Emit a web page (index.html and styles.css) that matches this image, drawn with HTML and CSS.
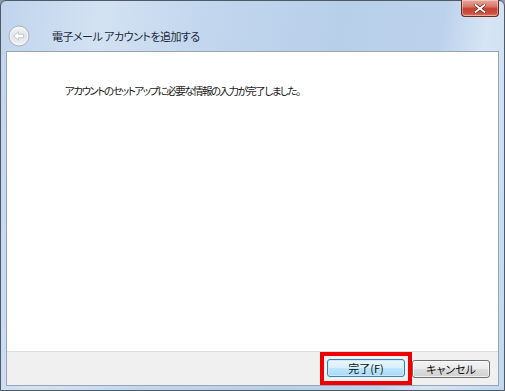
FILE: index.html
```html
<!DOCTYPE html>
<html lang="ja">

<head>
    <meta charset="UTF-8">
    <title>電子メール アカウントを追加する</title>
    <link rel="stylesheet" href="styles.css">
</head>

<body>
    <div class="window">
        <div class="titlebar">
            <button class="back-button" type="button" aria-label="戻る">
                <svg width="22" height="22" viewBox="0 0 22 22">
                    <defs>
                        <linearGradient id="backFill" x1="0" y1="0" x2="0" y2="1">
                            <stop offset="0" stop-color="#f4f7fa"/>
                            <stop offset="0.5" stop-color="#dde3ea"/>
                            <stop offset="1" stop-color="#eef2f6"/>
                        </linearGradient>
                    </defs>
                    <circle cx="11" cy="11" r="10" fill="url(#backFill)" stroke="#a9b4c0" stroke-width="1"/>
                    <circle cx="11" cy="11" r="8.6" fill="none" stroke="#ffffff" stroke-width="0.8" opacity="0.8"/>
                    <path d="M6 11 L10.5 6.8 L10.5 9.3 L15.5 9.3 L15.5 12.7 L10.5 12.7 L10.5 15.2 Z" fill="#ffffff" stroke="#b7c0ca" stroke-width="0.8" stroke-linejoin="round"/>
                </svg>
            </button>
            <span class="title">電子メール アカウントを追加する</span>
            <button class="close-button" type="button" aria-label="閉じる">
                <svg width="12" height="9" viewBox="0 0 12 9">
                    <path d="M1.5 1 L10.5 8 M10.5 1 L1.5 8" stroke="#5b2018" stroke-width="3" stroke-linecap="square"/>
                    <path d="M1.5 1 L10.5 8 M10.5 1 L1.5 8" stroke="#ffffff" stroke-width="1.8" stroke-linecap="square"/>
                </svg>
            </button>
        </div>

        <div class="panel">
            <div class="content">
                <p class="message">アカウントのセットアップに必要な情報の入力が完了しました。</p>
            </div>
            <div class="footer">
                <span class="highlight">
                    <button class="btn btn-default" type="button">完了(F)</button>
                </span>
                <button class="btn" type="button">キャンセル</button>
            </div>
        </div>
    </div>
</body>

</html>
```

FILE: styles.css
```css
body {
    margin: 0;
    padding: 0;
    background: #8f99a3;
    font-family: "Noto Sans CJK JP", "Noto Sans", sans-serif;
    font-feature-settings: "palt";
}

.window {
    width: 505px;
    height: 391px;
    box-sizing: border-box;
    border: 1px solid #4f5a66;
    border-radius: 6px 6px 0 0;
    padding: 0 5px 4px 5px;
    display: flex;
    flex-direction: column;
    position: relative;
    background: linear-gradient(100deg, #bfd4ec 0%, #d3e2f3 18%, #c3d7ee 35%, #b8cfea 60%, #bcd2ec 78%, #d6e5f5 86%, #c3d7ee 100%);
}

/* タイトルバー */
.titlebar {
    height: 50px;
    display: flex;
    align-items: center;
    padding-top: 20px;
    box-sizing: border-box;
}

.back-button {
    width: 22px;
    height: 22px;
    padding: 0;
    margin: 0 0 0 2px;
    border: none;
    background: none;
    display: flex;
}

.title {
    margin-left: 22px;
    font-size: 11px;
    color: #1e2a38;
    letter-spacing: -0.5px;
}

.close-button {
    position: absolute;
    top: -1px;
    right: 5px;
    width: 38px;
    height: 17px;
    padding: 0;
    border: 1px solid #6b2b22;
    border-top: none;
    border-radius: 0 0 4px 4px;
    background: linear-gradient(to bottom, #e9a99c 0%, #d9786a 40%, #c5412f 55%, #cf4f3c 85%, #e08877 100%);
    box-shadow: inset 0 0 0 1px rgba(255, 255, 255, 0.35);
    display: flex;
    align-items: center;
    justify-content: center;
}

/* 本体 */
.panel {
    flex: 1;
    display: flex;
    flex-direction: column;
    border: 1px solid #98a4b2;
    background: #ffffff;
}

.content {
    flex: 1;
    padding: 31px 0 0 58px;
}

.message {
    margin: 0;
    font-size: 10.5px;
    color: #1a1a1a;
    letter-spacing: -1.5px;
}

.footer {
    height: 34px;
    display: flex;
    justify-content: flex-end;
    align-items: center;
    padding-right: 8px;
    background: #f0f0f0;
    border-top: 1px solid #dfdfdf;
    box-sizing: border-box;
}

.highlight {
    border: 4px solid #ee0000;
    padding: 3px 3px 4px 3px;
    display: flex;
}

.btn {
    width: 78px;
    height: 18px;
    padding: 0;
    border: 1px solid #707070;
    border-radius: 3px;
    font-family: "Noto Sans CJK JP", "Noto Sans", sans-serif;
    font-feature-settings: "palt";
    font-size: 11px;
    line-height: 16px;
    color: #111111;
    background: linear-gradient(to bottom, #f3f3f3 0%, #ebebeb 48%, #dddddd 52%, #cfcfcf 100%);
    box-shadow: inset 0 0 0 1px rgba(255, 255, 255, 0.7);
}

.btn-default {
    border-color: #3c7fb1;
    background: linear-gradient(to bottom, #eaf6fd 0%, #d9f0fc 48%, #bee6fd 52%, #a7d9f5 100%);
    box-shadow: inset 0 0 0 1px #c8ecff;
}
```
